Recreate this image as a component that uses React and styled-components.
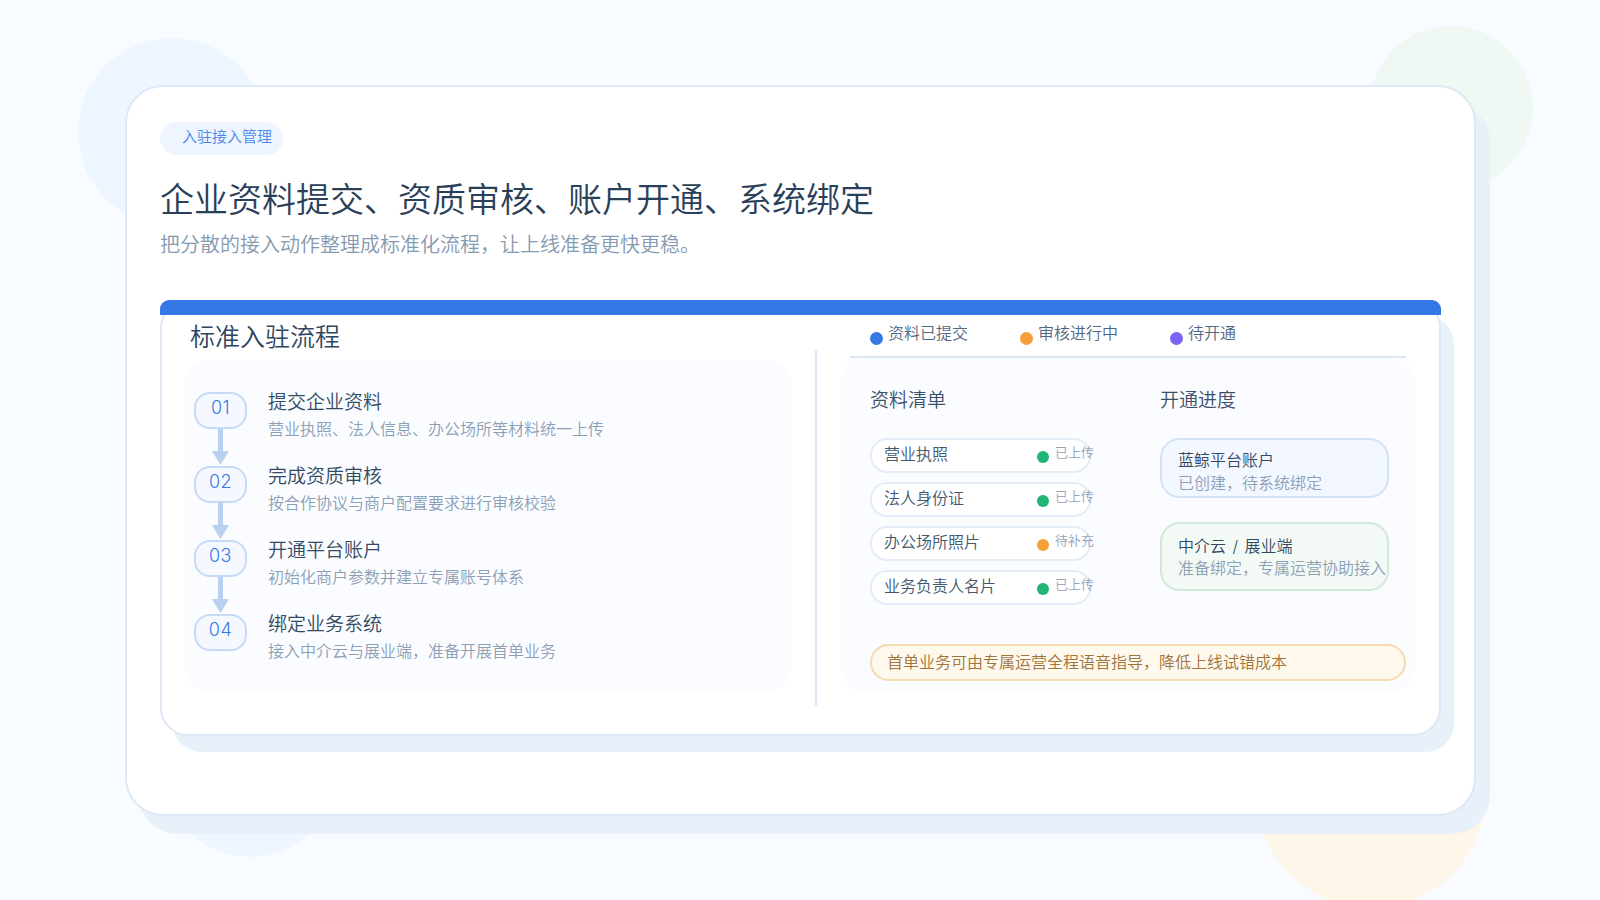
import React from 'react'
import styled, { createGlobalStyle } from 'styled-components'

const GlobalStyle = createGlobalStyle`
  html, body {
    margin: 0;
    padding: 0;
    background: #f8fbff;
  }
  * {
    box-sizing: border-box;
  }
`

const Page = styled.div`
  position: relative;
  width: 1600px;
  height: 900px;
  overflow: hidden;
  padding: 85px 0 0 125px;
  background: #f8fbff;
  font-family: Inter, "Noto Sans CJK SC", sans-serif;
  font-weight: 350;
`

const Blob = styled.div`
  position: absolute;
  left: ${p => p.$x}px;
  top: ${p => p.$y}px;
  width: ${p => p.$size}px;
  height: ${p => p.$size}px;
  border-radius: 50%;
  background: ${p => p.$color};
`

const Card = styled.div`
  position: relative;
  width: 1351px;
  height: 731px;
  padding: 35px 33px 0;
  background: #fff;
  border: 2px solid #dce8f5;
  border-radius: 38px;
  box-shadow: 14px 18px 0 #e8f0f9;
`

const Badge = styled.div`
  width: 123px;
  height: 33px;
  padding-left: 22px;
  border-radius: 17px;
  background: #eef5ff;
  color: #4a88ea;
  font-size: 15px;
  line-height: 30px;
  white-space: nowrap;
`

const Title = styled.h1`
  margin: 21px 0 0;
  color: #2a4059;
  font-size: 34px;
  font-weight: 350;
  line-height: 48px;
  white-space: nowrap;
`

const Subtitle = styled.p`
  margin: 6px 0 0;
  color: #8599b0;
  font-size: 20px;
  line-height: 30px;
`

const Panel = styled.section`
  position: relative;
  display: flex;
  align-items: flex-start;
  width: 1281px;
  height: 436px;
  margin-top: 40px;
  padding: 16px 0 0 23px;
  background: #fff;
  border: 2px solid #dce8f5;
  border-radius: 28px;
  box-shadow: 13px 16px 0 #e8f0f9;
`

const TopBar = styled.div`
  position: absolute;
  left: -2px;
  right: -2px;
  top: -2px;
  height: 15px;
  border-radius: 9px 9px 0 0;
  background: #3578e5;
`

const LeftColumn = styled.div`
  width: 606px;
  flex: none;
`

const SectionTitle = styled.h2`
  margin: 2px 0 6px 5px;
  color: #2d4661;
  font-size: 25px;
  font-weight: 350;
  line-height: 34px;
`

const StepsBox = styled.div`
  height: 331px;
  padding: 32px 0 0 9px;
  border-radius: 24px;
  background: #fafcff;
`

const Step = styled.div`
  display: flex;
  align-items: flex-start;
  gap: 21px;
  height: 74px;
`

const Marker = styled.div`
  display: flex;
  flex-direction: column;
  align-items: center;
  width: 53px;
  flex: none;
`

const StepNumber = styled.div`
  width: 53px;
  height: 37px;
  border: 2px solid #c5dbf5;
  border-radius: 16px;
  background: #f5f9ff;
  color: #3578e5;
  font-size: 18px;
  font-weight: 300;
  letter-spacing: 0.5px;
  line-height: 28px;
  text-align: center;
`

const Connector = styled.svg`
  display: block;
  width: 17px;
  height: 37px;
`

const StepText = styled.div`
  margin-top: -2px;
`

const StepTitle = styled.div`
  color: #324a64;
  font-size: 19px;
  line-height: 26px;
`

const StepDesc = styled.div`
  margin-top: 2px;
  color: #8c9fb5;
  font-size: 16px;
  line-height: 22px;
`

const Divider = styled.div`
  width: 2px;
  height: 356px;
  margin: 32px 23px 0 24px;
  flex: none;
  background: #dfe9f5;
`

const RightColumn = styled.div`
  width: 575px;
  flex: none;
`

const Legend = styled.div`
  display: flex;
  height: 40px;
  margin: 0 9px 0 10px;
  padding-left: 20px;
  border-bottom: 2px solid #dce8f5;
`

const LegendItem = styled.div`
  display: flex;
  align-items: flex-start;
  gap: 5px;
  width: 150px;
  padding-top: 2px;
  color: #52677f;
  font-size: 16px;
  line-height: 26px;
`

const LegendDot = styled.span`
  width: 13px;
  height: 13px;
  margin-top: 12px;
  flex: none;
  border-radius: 50%;
  background: ${p => p.$color};
`

const DetailBox = styled.div`
  display: flex;
  flex-direction: column;
  height: 333px;
  padding: 29px 9px 10px 30px;
  border-radius: 24px;
  background: #fafcff;
`

const DetailColumns = styled.div`
  display: flex;
  gap: 69px;
`

const ColumnTitle = styled.h3`
  margin: 0 0 23px;
  color: #3a5069;
  font-size: 19px;
  font-weight: 350;
  line-height: 28px;
`

const DocList = styled.div`
  display: flex;
  flex-direction: column;
  gap: 9px;
  width: 221px;
`

const DocRow = styled.div`
  display: flex;
  align-items: center;
  height: 35px;
  padding-left: 12px;
  border: 2px solid #e4edf7;
  border-radius: 17px;
  background: #fff;
  white-space: nowrap;
`

const DocName = styled.span`
  width: 153px;
  flex: none;
  margin-top: -4px;
  color: #42586f;
  font-size: 16px;
  line-height: 22px;
`

const DocDot = styled.span`
  width: 12px;
  height: 12px;
  margin-top: 3px;
  flex: none;
  border-radius: 50%;
  background: ${p => p.$color};
`

const DocStatus = styled.span`
  margin: -7px 0 0 6px;
  color: #93a3b8;
  font-size: 13px;
  line-height: 18px;
`

const ProgressList = styled.div`
  display: flex;
  flex-direction: column;
  gap: 24px;
  width: 229px;
`

const ProgressCard = styled.div`
  height: ${p => p.$height}px;
  padding: ${p => p.$top}px 0 0 16px;
  border: 2px solid ${p => p.$border};
  border-radius: 20px;
  background: ${p => p.$bg};
  white-space: nowrap;
`

const ProgressName = styled.div`
  margin-bottom: ${p => p.$gap}px;
  color: #34495f;
  font-size: 16px;
  line-height: 22px;
  word-spacing: 2px;
`

const ProgressDesc = styled.div`
  color: #8ea0b6;
  font-size: 16px;
  line-height: 22px;
`

const Notice = styled.div`
  width: 536px;
  height: 37px;
  margin-top: auto;
  padding-left: 15px;
  border: 2px solid #f3dcae;
  border-radius: 19px;
  background: #fff8ec;
  color: #a0743a;
  font-size: 16px;
  line-height: 32px;
`

const steps = [
  { no: '01', title: '提交企业资料', desc: '营业执照、法人信息、办公场所等材料统一上传' },
  { no: '02', title: '完成资质审核', desc: '按合作协议与商户配置要求进行审核校验' },
  { no: '03', title: '开通平台账户', desc: '初始化商户参数并建立专属账号体系' },
  { no: '04', title: '绑定业务系统', desc: '接入中介云与展业端，准备开展首单业务' },
]

const legend = [
  { label: '资料已提交', color: '#3578e5' },
  { label: '审核进行中', color: '#f59f38' },
  { label: '待开通', color: '#7b61f5' },
]

const docs = [
  { name: '营业执照', status: '已上传', color: '#1fb574' },
  { name: '法人身份证', status: '已上传', color: '#1fb574' },
  { name: '办公场所照片', status: '待补充', color: '#f59f38' },
  { name: '业务负责人名片', status: '已上传', color: '#1fb574' },
]

const App = () => (
  <Page>
    <GlobalStyle />
    <Blob $x={78} $y={38} $size={188} $color="#eef6ff" />
    <Blob $x={1369} $y={26} $size={164} $color="#f0f8f4" />
    <Blob $x={165} $y={687} $size={170} $color="#eff6ff" />
    <Blob $x={1256} $y={678} $size={230} $color="#fff6ea" />
    <Card>
      <Badge>入驻接入管理</Badge>
      <Title>企业资料提交、资质审核、账户开通、系统绑定</Title>
      <Subtitle>把分散的接入动作整理成标准化流程，让上线准备更快更稳。</Subtitle>
      <Panel>
        <TopBar />
        <LeftColumn>
          <SectionTitle>标准入驻流程</SectionTitle>
          <StepsBox>
            {steps.map((step, i) => (
              <Step key={step.no}>
                <Marker>
                  <StepNumber>{step.no}</StepNumber>
                  {i < steps.length - 1 && (
                    <Connector viewBox="0 0 17 37">
                      <rect x="6" y="0" width="5" height="23" fill="#b8d1ee" />
                      <polygon points="0,22 17,22 8.5,36" fill="#b8d1ee" />
                    </Connector>
                  )}
                </Marker>
                <StepText>
                  <StepTitle>{step.title}</StepTitle>
                  <StepDesc>{step.desc}</StepDesc>
                </StepText>
              </Step>
            ))}
          </StepsBox>
        </LeftColumn>
        <Divider />
        <RightColumn>
          <Legend>
            {legend.map(item => (
              <LegendItem key={item.label}>
                <LegendDot $color={item.color} />
                {item.label}
              </LegendItem>
            ))}
          </Legend>
          <DetailBox>
            <DetailColumns>
              <div>
                <ColumnTitle>资料清单</ColumnTitle>
                <DocList>
                  {docs.map(doc => (
                    <DocRow key={doc.name}>
                      <DocName>{doc.name}</DocName>
                      <DocDot $color={doc.color} />
                      <DocStatus>{doc.status}</DocStatus>
                    </DocRow>
                  ))}
                </DocList>
              </div>
              <div>
                <ColumnTitle>开通进度</ColumnTitle>
                <ProgressList>
                  <ProgressCard $height={60} $top={9} $border="#d3e3f7" $bg="#f3f7ff">
                    <ProgressName $gap={1}>蓝鲸平台账户</ProgressName>
                    <ProgressDesc>已创建，待系统绑定</ProgressDesc>
                  </ProgressCard>
                  <ProgressCard $height={69} $top={11} $border="#d2e9da" $bg="#f3faf6">
                    <ProgressName $gap={0}>中介云 / 展业端</ProgressName>
                    <ProgressDesc>准备绑定，专属运营协助接入</ProgressDesc>
                  </ProgressCard>
                </ProgressList>
              </div>
            </DetailColumns>
            <Notice>首单业务可由专属运营全程语音指导，降低上线试错成本</Notice>
          </DetailBox>
        </RightColumn>
      </Panel>
    </Card>
  </Page>
)

export default App
